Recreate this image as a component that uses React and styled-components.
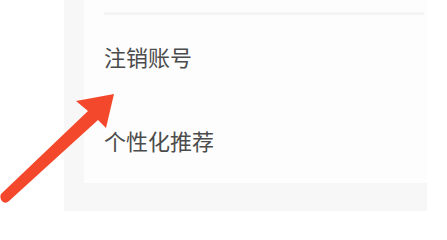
import React from "react";
import styled, { createGlobalStyle } from "styled-components";

const GlobalStyle = createGlobalStyle`
  html, body {
    margin: 0;
    padding: 0;
    background: #ffffff;
  }
  body {
    font-family: "Noto Sans CJK SC", "Noto Sans", sans-serif;
  }
`;

const Page = styled.div`
  position: relative;
  width: 447px;
  height: 211px;
  overflow: hidden;
  background: #ffffff;
`;

const Panel = styled.div`
  margin-left: 64px;
  width: 363px;
  height: 211px;
  padding-left: 20px;
  box-sizing: border-box;
  background: #f7f7f7;
`;

const Card = styled.div`
  background: #fdfdfd;
  padding-left: 20px;
  display: flex;
  flex-direction: column;
`;

const Row = styled.div`
  height: ${(p) => p.h}px;
  display: flex;
  align-items: center;
  margin-right: 3px;
  border-bottom: ${(p) => (p.divided ? "3px solid #f4f4f4" : "none")};
`;

const Label = styled.span`
  font-size: 22px;
  color: #4b4b4b;
  line-height: 1;
`;

const Arrow = styled.svg`
  position: absolute;
  left: 0;
  top: 0;
  pointer-events: none;
`;

export default function App() {
  return (
    <Page>
      <GlobalStyle />
      <Panel>
        <Card>
          <Row h={12} divided />
          <Row h={82}>
            <Label>注销账号</Label>
          </Row>
          <Row h={86}>
            <Label>个性化推荐</Label>
          </Row>
        </Card>
      </Panel>
      <Arrow width="447" height="211" viewBox="0 0 447 211">
        <path
          d="M114 94 L76 101 L88 111 L1 194 Q-1 199 3 202 Q6 204 9 201 L98 120 L106 128 Z"
          fill="#f4482d"
        />
      </Arrow>
    </Page>
  );
}
